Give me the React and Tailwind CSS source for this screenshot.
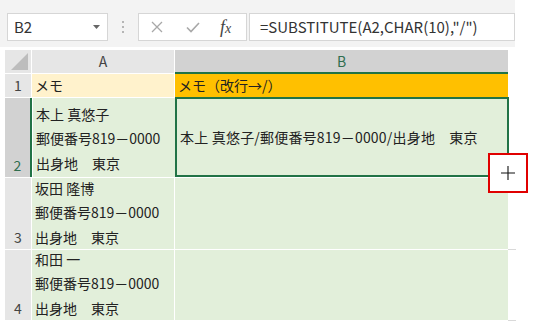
import React from 'react';

const jp = { fontFamily: '"Noto Sans CJK JP", "Noto Sans", sans-serif' };

const rows = [
  { n: 2, h: 'h-[80px]', lines: ['本上 真悠子', '郵便番号819－0000', '出身地　東京'], b: '本上 真悠子/郵便番号819－0000/出身地　東京', selected: true },
  { n: 3, h: 'h-[72px]', lines: ['坂田 隆博', '郵便番号819－0000', '出身地　東京'] },
  { n: 4, h: 'h-[71px]', lines: ['和田 一', '郵便番号819－0000', '出身地　東京'] },
];

function Toolbar() {
  return (
    <div className="w-[515px] h-[47px] bg-[#f3f3f3] flex items-start pt-[13px] pl-[7px]">
      <div className="w-[101px] h-[28px] bg-white border border-[#d6d6d6] flex items-center justify-between pl-[6px] pr-[7px]">
        <span className="text-[15px] text-[#333]" style={jp}>B2</span>
        <svg width="7" height="4" viewBox="0 0 7 4"><path d="M0 0h7L3.5 4z" fill="#666" /></svg>
      </div>
      <div className="w-[30px] h-[28px] flex flex-col items-center justify-center gap-[3px]">
        <span className="w-[2px] h-[2px] bg-[#b5b5b5]" />
        <span className="w-[2px] h-[2px] bg-[#b5b5b5]" />
        <span className="w-[2px] h-[2px] bg-[#b5b5b5]" />
      </div>
      <div className="w-[109px] h-[28px] bg-white border border-[#d6d6d6] flex items-center">
        <svg className="ml-[12px]" width="12" height="12" viewBox="0 0 12 12">
          <path d="M1 1l10 10M11 1L1 11" stroke="#a8a8a8" strokeWidth="1.3" />
        </svg>
        <svg className="ml-[23px]" width="14" height="11" viewBox="0 0 14 11">
          <path d="M1 5.5l4 4L13 1" stroke="#a8a8a8" strokeWidth="1.6" fill="none" />
        </svg>
        <span className="ml-[20px] text-[18px] italic text-[#444] leading-none" style={{ fontFamily: '"Liberation Serif", serif' }}>
          f<span className="text-[14px]">x</span>
        </span>
      </div>
      <div className="ml-[2px] flex-1 h-[28px] bg-white border border-[#d6d6d6] flex items-center pl-[10px]">
        <span className="text-[15px] text-[#333]" style={jp}>=SUBSTITUTE(A2,CHAR(10),"/")</span>
      </div>
    </div>
  );
}

export default function App() {
  return (
    <div className="w-[535px] h-[323px] bg-white relative overflow-hidden text-[#222]" style={jp}>
      <Toolbar />
      <div className="mt-[3px] ml-[5px] flex flex-col">
        {/* column headers */}
        <div className="flex h-[24px]">
          <div className="w-[26px] h-[23px] bg-[#e6e6e6] relative mr-px">
            <svg className="absolute right-[3px] bottom-[3px]" width="17" height="17" viewBox="0 0 17 17">
              <path d="M17 0V17H0z" fill="#bdbdbd" />
            </svg>
          </div>
          <div className="w-[142px] h-[23px] bg-[#e6e6e6] mr-px flex items-center justify-center text-[14px] text-[#444]">A</div>
          <div className="w-[333px] h-[24px] bg-[#d2d2d2] border-b-2 border-[#217346] flex items-center justify-center text-[14px] text-[#2f6e4f]">B</div>
        </div>
        {/* row 1 */}
        <div className="flex h-[24px]">
          <div className="w-[26px] h-[23px] bg-[#e6e6e6] mr-px flex items-center justify-center text-[14px] text-[#444]">1</div>
          <div className="w-[142px] h-[23px] bg-[#fff2cc] mr-px flex items-center pl-[3px] text-[14px]">メモ</div>
          <div className="w-[333px] h-[23px] bg-[#ffc000] flex items-center pl-[3px] text-[14px]">メモ（改行→/）</div>
        </div>
        {rows.map((r) => (
          <div key={r.n} className={`flex ${r.h}`}>
            <div
              className={`w-[26px] mr-px mb-px flex items-end justify-center text-[14px] leading-[24px] ${
                r.selected ? 'bg-[#d2d2d2] text-[#2f6e4f] border-r-2 border-[#217346] w-[27px] mr-0' : 'bg-[#e6e6e6] text-[#444]'
              }`}
            >
              {r.n}
            </div>
            <div className={`w-[142px] mr-px mb-px bg-[#e2efda] flex flex-col justify-end pl-[3px] text-[14px] leading-[24.5px] ${r.selected ? 'pb-[2px]' : ''}`}>
              {r.lines.map((l) => (
                <div key={l} className="whitespace-pre">{l}</div>
              ))}
            </div>
            <div className={`w-[333px] mb-px bg-[#e2efda] relative flex items-center pl-[3px] text-[14px] ${r.selected ? 'border-2 border-[#217346] -mt-px -ml-px w-[334px]' : ''}`}>
              {r.b && <span className="whitespace-pre tracking-[0.2px]">{r.b}</span>}
            </div>
            <div className="w-[8px] self-end h-px bg-[#d9d9d9]" />
          </div>
        ))}
      </div>
      <div className="absolute left-[488px] top-[153px] w-[40px] h-[40px] bg-white border-2 border-[#e00000] flex items-center justify-center">
        <svg width="14" height="14" viewBox="0 0 14 14">
          <path d="M7 0v14M0 7h14" stroke="#111" strokeWidth="1.1" />
        </svg>
      </div>
    </div>
  );
}
